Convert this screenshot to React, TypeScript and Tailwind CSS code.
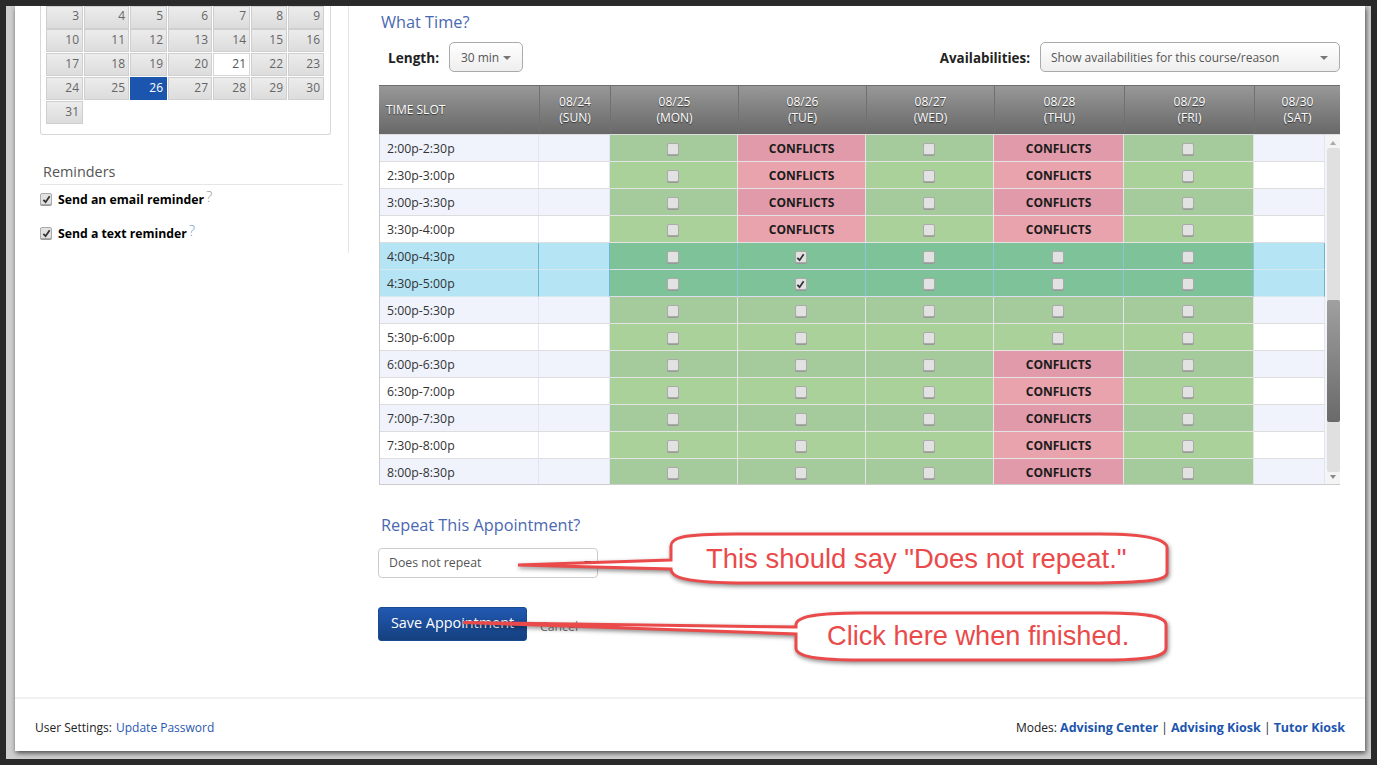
const weeks = [
  [3, 4, 5, 6, 7, 8, 9],
  [10, 11, 12, 13, 14, 15, 16],
  [17, 18, 19, 20, 21, 22, 23],
  [24, 25, 26, 27, 28, 29, 30],
  [31],
];

const headers = [
  ['08/24', '(SUN)'],
  ['08/25', '(MON)'],
  ['08/26', '(TUE)'],
  ['08/27', '(WED)'],
  ['08/28', '(THU)'],
  ['08/29', '(FRI)'],
  ['08/30', '(SAT)'],
];

const slots = [
  '2:00p-2:30p',
  '2:30p-3:00p',
  '3:00p-3:30p',
  '3:30p-4:00p',
  '4:00p-4:30p',
  '4:30p-5:00p',
  '5:00p-5:30p',
  '5:30p-6:00p',
  '6:00p-6:30p',
  '6:30p-7:00p',
  '7:00p-7:30p',
  '7:30p-8:00p',
  '8:00p-8:30p',
];

const tueConflicts = [0, 1, 2, 3];
const thuConflicts = [0, 1, 2, 3, 8, 9, 10, 11, 12];
const picked = [4, 5];

function Check({ checked }: { checked?: boolean }) {
  return (
    <span className="flex h-[12px] w-[12px] items-center justify-center rounded-[2px] border border-[#aaa] bg-[#e2e2e2] shadow-[0_1px_0_#999]">
      {checked && (
        <svg viewBox="0 0 10 10" className="h-[9px] w-[9px]">
          <path d="M1.5 5.5 L4 8 L8.5 1.5" fill="none" stroke="#333" strokeWidth="2" />
        </svg>
      )}
    </span>
  );
}

function Caret() {
  return <span className="h-0 w-0 border-x-[4px] border-t-[4px] border-x-transparent border-t-[#777]" />;
}

function Slot({ row, conflict, checked }: { row: number; conflict?: boolean; checked?: boolean }) {
  const sel = picked.includes(row);
  const odd = row % 2 === 0;
  const bg = sel ? 'bg-[#7dc298]' : conflict ? (odd ? 'bg-[#e09aa9]' : 'bg-[#e8a3ad]') : odd ? 'bg-[#a5ca9b]' : 'bg-[#abd19b]';
  return (
    <div className={`flex items-center justify-center border-r border-b pt-[2px] ${conflict ? '' : 'pr-[2px]'} ${sel ? 'border-r-[#8cc5d8] border-b-[#dde]' : 'border-[#e4e4e4]'} ${bg}`}>
      {conflict ? <span className="text-[12px] font-bold text-[#1a1a1a]">CONFLICTS</span> : <Check checked={checked} />}
    </div>
  );
}

function Blank({ row }: { row: number }) {
  const sel = picked.includes(row);
  const bg = sel ? 'bg-[#b5e4f5]' : row % 2 === 0 ? 'bg-[#f0f3fc]' : 'bg-white';
  return <div className={`border-r border-b ${sel ? 'border-r-[#6db6d6] border-b-[#d5e8f0]' : 'border-r-[#e2e4f8] border-b-[#ddd]'} ${bg}`} />;
}

function Callouts() {
  return (
    <>
      <svg viewBox="0 0 1377 765" className="pointer-events-none absolute inset-0 h-[765px] w-[1377px] drop-shadow-[1px_2px_2px_rgba(0,0,0,0.45)]">
        <path
          d="M671 560 L518 565 L671 569 C671 575 675 582 737 583 L1100 583 C1150 582 1167 580 1167 573 L1167 548 C1167 540 1150 534 1100 534 L737 534 C680 534 671 538 671 546 Z"
          fill="#fff"
          stroke="#ea4a4a"
          strokeWidth="3"
        />
        <path
          d="M796 627 L463 622.5 L796 634 L796 648 C796 656 815 660 860 660 L1105 660 C1150 660 1166 656 1166 648 L1166 625 C1166 617 1150 613 1105 613 L860 613 C815 613 796 617 796 625 Z"
          fill="#fff"
          stroke="#ea4a4a"
          strokeWidth="3"
        />
      </svg>
      <div className="absolute left-[706px] top-[543px] font-['Liberation_Sans',sans-serif] text-[27.45px] leading-[32px] whitespace-nowrap text-[#ea4a4a]">
        This should say "Does not repeat."
      </div>
      <div className="absolute left-[827px] top-[620px] font-['Liberation_Sans',sans-serif] text-[27.2px] leading-[32px] whitespace-nowrap text-[#ea4a4a]">
        Click here when finished.
      </div>
    </>
  );
}

export default function App() {
  return (
    <div className="relative h-[765px] w-[1377px] overflow-hidden bg-[#2a2a2a] p-[6px] font-['Open_Sans',sans-serif] text-[12px] text-[#222]">
      <div className="h-[753px] bg-[#cfcfcf] pr-[6px] pl-[9px]">
        <div className="flex h-[745px] flex-col bg-white shadow-[1px_2px_5px_#444]">
          <div className="flex flex-1">
            {/* left column */}
            <div className="h-[247px] w-[334px] border-r border-[#e6e6e6] pl-[25px]">
              <div className="flex h-[129px] w-[291px] flex-col gap-px rounded-b-[3px] border-x border-b border-[#d8d8d8] pl-[5px]">
                {weeks.map((wk, i) => (
                  <div key={i} className={`grid grid-cols-[37px_45px_37px_44px_37px_36px_36px] gap-[1px] ${i === 0 ? 'h-[22px]' : 'h-[23px]'}`}>
                    {wk.map((d) => (
                      <div
                        key={d}
                        className={`flex items-center justify-end border pr-[3px] ${i === 0 ? 'pb-[3px]' : 'pb-[1px]'} ${
                          d === 26
                            ? 'border-[#1c55ae] bg-[#1c55ae] text-white'
                            : d === 21
                              ? 'border-[#d5d5d5] bg-white text-[#555]'
                              : 'border-[#cfcfcf] bg-gradient-to-b from-[#ececec] to-[#dcdcdc] text-[#666]'
                        }`}
                      >
                        {d}
                      </div>
                    ))}
                  </div>
                ))}
              </div>
              <div className="mt-[27px] w-[303px] border-b border-[#e6e6e6] pb-[2px] pl-[3px] text-[14.4px] leading-[20px] text-[#555]">Reminders</div>
              <div className="mt-[6px] flex h-[16px] items-center gap-[6px]">
                <Check checked />
                <span className="pt-[2px] text-[12.25px] font-bold text-black">Send an email reminder</span>
                <span className="-ml-[4px] -mt-[6px] text-[15px] font-light text-[#999]">?</span>
              </div>
              <div className="mt-[18px] flex h-[16px] items-center gap-[6px]">
                <Check checked />
                <span className="pt-[2px] text-[12.25px] font-bold text-black">Send a text reminder</span>
                <span className="-ml-[4px] -mt-[6px] text-[15px] font-light text-[#6fa0c8]">?</span>
              </div>
            </div>

            {/* right column */}
            <div className="w-[961px] pl-0 ml-[30px]">
              <h2 className="mt-[5px] pl-[2px] text-[16.3px] leading-[22px] text-[#4a68b2]">What Time?</h2>
              <div className="mt-[9px] flex h-[30px] items-center">
                <span className="ml-[9px] pt-[3px] text-[13.6px] font-bold">Length:</span>
                <button className="ml-[10px] flex h-[30px] w-[74px] items-center justify-center gap-[4px] rounded-[5px] border border-[#aaa] bg-gradient-to-b from-white to-[#eee] pt-[1px] text-[#555]">
                  30 min <Caret />
                </button>
                <span className="ml-auto pt-[3px] text-[13.4px] font-bold">Availabilities:</span>
                <button className="ml-[10px] flex h-[30px] w-[300px] items-center justify-between rounded-[5px] border border-[#aaa] bg-gradient-to-b from-white to-[#eee] pt-[1px] pr-[11px] pl-[10px] text-[#555]">
                  Show availabilities for this course/reason <Caret />
                </button>
              </div>

              {/* schedule table */}
              <div className="mt-[13px] w-[961px]">
                <div className="grid h-[49px] grid-cols-[161px_71px_128px_128px_128px_130px_130px_85px] border-t border-[#6e6e6e] bg-gradient-to-b from-[#989898] to-[#686868] pb-[1px] text-white [text-shadow:0_1px_1px_#333]">
                  <div className="flex items-center border-r border-[#707070] pl-[7px] text-[12px]">TIME SLOT</div>
                  {headers.map(([date, day]) => (
                    <div key={date} className="flex flex-col items-center justify-center border-r border-[#707070] leading-[16px] last:border-r-0">
                      <span>{date}</span>
                      <span>{day}</span>
                    </div>
                  ))}
                </div>
                <div className="flex h-[351px] border-t border-b border-l border-t-[#ddd] border-b-[#ccc] border-l-[#ccc]">
                  <div className="grid w-[945px] grid-cols-[159px_71px_128px_128px_128px_130px_130px_71px] auto-rows-[27px] overflow-hidden">
                    {slots.map((s, r) => {
                      const sel = picked.includes(r);
                      return (
                        <div key={s} className="contents">
                          <div className={`flex items-center border-r border-b pt-[2px] pl-[7px] text-[12.3px] text-[#333] ${sel ? 'border-r-[#6db6d6] border-b-[#d5e8f0] bg-[#b5e4f5]' : `border-r-[#e2e4f8] border-b-[#ddd] ${r % 2 === 0 ? 'bg-[#f0f3fc]' : 'bg-white'}`}`}>
                            {s}
                          </div>
                          <Blank row={r} />
                          <Slot row={r} />
                          <Slot row={r} conflict={tueConflicts.includes(r)} checked={sel} />
                          <Slot row={r} />
                          <Slot row={r} conflict={thuConflicts.includes(r)} />
                          <Slot row={r} />
                          <Blank row={r} />
                        </div>
                      );
                    })}
                  </div>
                  {/* scrollbar */}
                  <div className="relative flex w-[15px] flex-col items-center bg-[#f4f4f4]">
                    <span className="mt-[6px] h-0 w-0 border-x-[3px] border-b-[4px] border-x-transparent border-b-[#aaa]" />
                    <div className="mt-[3px] ml-[2px] flex w-[13px] flex-1 flex-col rounded-[2px] bg-[#e0e0e0] pt-[152px]">
                      <div className="h-[122px] rounded-[2px] bg-gradient-to-b from-[#a0a0a0] to-[#6a6a6a]" />
                    </div>
                    <span className="mt-[3px] mb-[5px] h-0 w-0 border-x-[3px] border-t-[4px] border-x-transparent border-t-[#888]" />
                  </div>
                </div>
              </div>

              <h2 className="mt-[28px] pl-[2px] text-[16.3px] leading-[24px] text-[#4a68b2]">Repeat This Appointment?</h2>
              <div className="relative mt-[11px] -ml-px flex h-[30px] w-[220px] items-center rounded-[4px] border border-[#ccc] pt-[1px] pl-[10px] text-[12.3px] text-[#555]">
                Does not repeat
                <span className="absolute right-[5px] top-[12px] h-0 w-0 border-x-[4px] border-t-[4px] border-x-transparent border-t-[#222]" />
              </div>
              <div className="mt-[29px] -ml-px flex items-end">
                <button className="h-[34px] w-[149px] rounded-[3px] border border-[#1a4a90] bg-gradient-to-b from-[#2159b2] to-[#15407f] pb-[2px] text-[14.4px] text-white">
                  Save Appointment
                </button>
                <a className="ml-[13px] pb-[5px] text-[12.3px] text-[#777]">Cancel</a>
              </div>
            </div>
          </div>

          <div className="-mt-px flex h-[54px] items-center justify-between border-t-2 border-[#f1f1f1] pt-[6px] pr-[20px] pl-[20px]">
            <div>
              User Settings: <a className="ml-px text-[#2a58b0]">Update Password</a>
            </div>
            <div>
              Modes: <a className="text-[12.5px] font-bold text-[#1c55ae]">Advising Center</a> | <a className="text-[12.5px] font-bold text-[#1c55ae]">Advising Kiosk</a> | <a className="text-[12.5px] font-bold text-[#1c55ae]">Tutor Kiosk</a>
            </div>
          </div>
        </div>
      </div>
      <Callouts />
    </div>
  );
}
